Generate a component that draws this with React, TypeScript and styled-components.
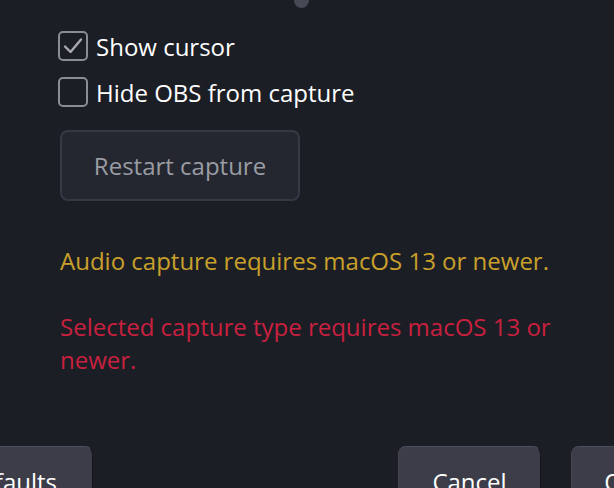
import styled, { createGlobalStyle } from 'styled-components';

const GlobalStyle = createGlobalStyle`
  html, body {
    margin: 0;
    padding: 0;
    background: #1c1e26;
    overflow: hidden;
  }
  body {
    font-family: 'Open Sans', 'Noto Sans', sans-serif;
  }
`;

const Page = styled.div`
  position: relative;
  width: 614px;
  height: 488px;
  overflow: hidden;
  background: #1c1e26;
  box-sizing: border-box;
  padding: 31px 0 0 58px;
`;

const SliderHandle = styled.div`
  position: absolute;
  top: -7px;
  left: 294px;
  width: 15px;
  height: 15px;
  border-radius: 50%;
  background: #474a54;
`;

const CheckList = styled.div`
  display: flex;
  flex-direction: column;
  gap: 16px;
`;

const CheckRow = styled.label`
  display: flex;
  align-items: center;
  gap: 8px;
  height: 30px;
  font-size: 24px;
  color: #ffffff;
`;

const Box = styled.span`
  box-sizing: border-box;
  width: 30px;
  height: 30px;
  border: 2px solid #8b8d94;
  border-radius: 5px;
  display: flex;
  align-items: center;
  justify-content: center;
`;

const RestartButton = styled.button`
  box-sizing: border-box;
  margin: 23px 0 0 2px;
  width: 240px;
  height: 71px;
  border: 2px solid #363944;
  border-radius: 8px;
  background: #242730;
  color: #9a9ca3;
  font-family: inherit;
  font-size: 24px;
`;

const Message = styled.p<{ $tone: 'warn' | 'error' }>`
  margin: 0;
  margin-left: 2px;
  width: 530px;
  font-size: 24px;
  line-height: 33px;
  color: ${({ $tone }) => ($tone === 'warn' ? '#c9a02a' : '#c9203f')};
`;

const Messages = styled.div`
  display: flex;
  flex-direction: column;
  gap: 33px;
  margin-top: 43px;
`;

const Footer = styled.div`
  display: flex;
  align-items: flex-start;
  width: 743px;
  margin: 70px 0 0 -130px;
`;

const FooterButton = styled.button<{ $width: number }>`
  box-sizing: border-box;
  flex: none;
  width: ${({ $width }) => $width}px;
  height: 70px;
  padding: 0;
  border: 1px solid #15161c;
  border-top-color: #4d4e5b;
  border-left-color: #44454f;
  border-radius: 8px;
  background: #3c3d49;
  color: #ffffff;
  font-family: inherit;
  font-size: 24px;
  white-space: nowrap;
  overflow: hidden;
`;

const Spacer = styled.div`
  flex: 1;
`;

const Gap = styled.div`
  flex: none;
  width: 30px;
`;

function CheckIcon() {
  return (
    <svg width="22" height="22" viewBox="0 0 22 22" fill="none">
      <path
        d="M3 11.5 L8.5 17 L19 4.5"
        stroke="#a8aab0"
        strokeWidth="2.4"
        strokeLinecap="round"
        strokeLinejoin="round"
      />
    </svg>
  );
}

export default function App() {
  return (
    <>
      <GlobalStyle />
      <Page>
        <SliderHandle />
        <CheckList>
          <CheckRow>
            <Box>
              <CheckIcon />
            </Box>
            Show cursor
          </CheckRow>
          <CheckRow>
            <Box />
            Hide OBS from capture
          </CheckRow>
        </CheckList>
        <RestartButton>Restart capture</RestartButton>
        <Messages>
          <Message $tone="warn">Audio capture requires macOS 13 or newer.</Message>
          <Message $tone="error">
            Selected capture type requires macOS 13 or newer.
          </Message>
        </Messages>
        <Footer>
          <FooterButton $width={165}>Defaults</FooterButton>
          <Spacer />
          <FooterButton $width={143}>Cancel</FooterButton>
          <Gap />
          <FooterButton $width={100}>OK</FooterButton>
        </Footer>
      </Page>
    </>
  );
}
